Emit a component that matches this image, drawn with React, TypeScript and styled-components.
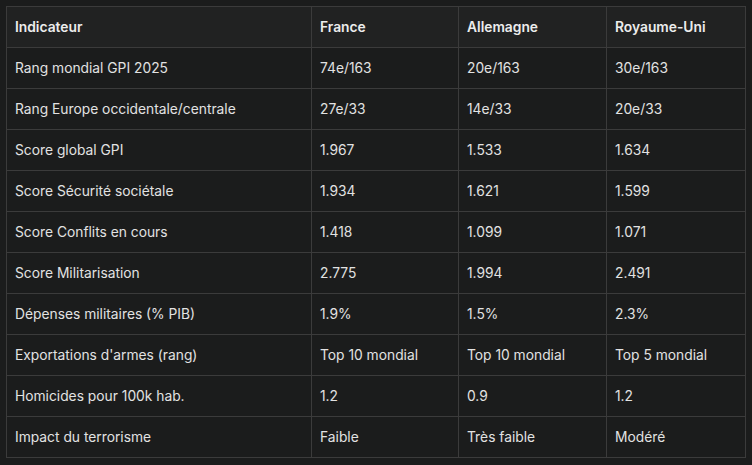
import React from "react";
import styled, { createGlobalStyle } from "styled-components";

const Global = createGlobalStyle`
  html, body { margin: 0; padding: 0; background: #1b1c1c; }
  body { font-family: Inter, "Noto Sans", sans-serif; color: #e6e6e6; }
`;

const Wrap = styled.div`
  padding: 6px 7px 8px 6px;
`;

const Table = styled.table`
  border-collapse: collapse;
  width: 739px;
  table-layout: fixed;
  font-size: 13.8px;
`;

const Th = styled.th<{ $w: number }>`
  width: ${(p) => p.$w}px;
  height: 41px;
  padding: 0 8px;
  text-align: left;
  font-weight: 600;
  background: #212222;
  border: 1px solid #3b3b3b;
  color: #ececec;
  box-sizing: border-box;
`;

const Td = styled.td`
  height: 41px;
  padding: 0 8px;
  box-sizing: border-box;
  background: #1b1c1c;
  border: 1px solid #3b3b3b;
  color: #e2e2e2;
  font-weight: 400;
`;

const headers: [string, number][] = [
  ["Indicateur", 305],
  ["France", 147],
  ["Allemagne", 148],
  ["Royaume-Uni", 139],
];

const rows = [
  ["Rang mondial GPI 2025", "74e/163", "20e/163", "30e/163"],
  ["Rang Europe occidentale/centrale", "27e/33", "14e/33", "20e/33"],
  ["Score global GPI", "1.967", "1.533", "1.634"],
  ["Score Sécurité sociétale", "1.934", "1.621", "1.599"],
  ["Score Conflits en cours", "1.418", "1.099", "1.071"],
  ["Score Militarisation", "2.775", "1.994", "2.491"],
  ["Dépenses militaires (% PIB)", "1.9%", "1.5%", "2.3%"],
  ["Exportations d'armes (rang)", "Top 10 mondial", "Top 10 mondial", "Top 5 mondial"],
  ["Homicides pour 100k hab.", "1.2", "0.9", "1.2"],
  ["Impact du terrorisme", "Faible", "Très faible", "Modéré"],
];

export default function App() {
  return (
    <>
      <Global />
      <Wrap>
        <Table>
          <thead>
            <tr>
              {headers.map(([h, w]) => (
                <Th key={h} $w={w}>{h}</Th>
              ))}
            </tr>
          </thead>
          <tbody>
            {rows.map((r) => (
              <tr key={r[0]}>
                {r.map((c, i) => (
                  <Td key={i}>{c}</Td>
                ))}
              </tr>
            ))}
          </tbody>
        </Table>
      </Wrap>
    </>
  );
}
